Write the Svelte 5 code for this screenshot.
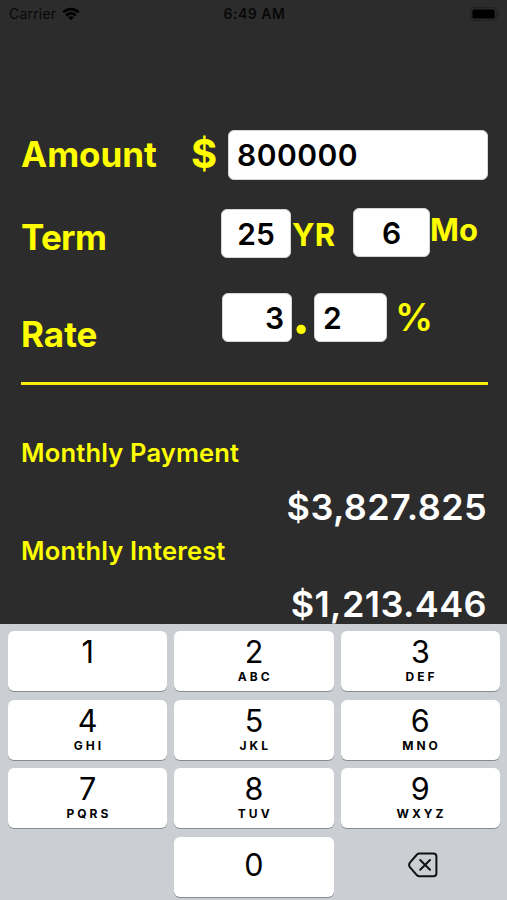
<script>
  let amount = '800000';
  let years = '25';
  let months = '6';
  let rateWhole = '3';
  let rateDecimal = '2';

  const monthlyPayment = '$3,827.825';
  const monthlyInterest = '$1,213.446';

  const keys = [
    { digit: '1', letters: '' },
    { digit: '2', letters: 'ABC' },
    { digit: '3', letters: 'DEF' },
    { digit: '4', letters: 'GHI' },
    { digit: '5', letters: 'JKL' },
    { digit: '6', letters: 'MNO' },
    { digit: '7', letters: 'PQRS' },
    { digit: '8', letters: 'TUV' },
    { digit: '9', letters: 'WXYZ' },
  ];

  function press(digit) {
    amount = amount + digit;
  }

  function erase() {
    amount = amount.slice(0, -1);
  }
</script>

<main>
  <header class="status">
    <div class="carrier">
      <span>Carrier</span>
      <svg width="18" height="14" viewBox="0 0 18 14">
        <path d="M0.4 4.4 A12 12 0 0 1 17.6 4.4 L15.8 6.3 A9.4 9.4 0 0 0 2.2 6.3 Z" />
        <path d="M3.3 7.4 A7.8 7.8 0 0 1 14.7 7.4 L12.8 9.4 A5.3 5.3 0 0 0 5.2 9.4 Z" />
        <path d="M6.2 10.4 A3.9 3.9 0 0 1 11.8 10.4 L9 13.3 Z" />
      </svg>
    </div>
    <span class="time">6:49 AM</span>
    <svg class="battery" width="30" height="14" viewBox="0 0 30 14">
      <rect x="0.7" y="0.7" width="25.6" height="12.6" rx="3" fill="none" stroke="#1f1f1f" />
      <rect x="2.4" y="2.4" width="22.2" height="9.2" rx="1.6" />
      <path d="M27.6 4.7 Q29.2 5.4 29.2 7 Q29.2 8.6 27.6 9.3 Z" fill="#1f1f1f" />
    </svg>
  </header>

  <section class="form">
    <div class="row amount">
      <label for="amount">Amount</label>
      <span class="dollar">$</span>
      <input id="amount" bind:value={amount} />
    </div>
    <div class="row term">
      <label for="years">Term</label>
      <input id="years" class="years" bind:value={years} />
      <span class="unit yr">YR</span>
      <input class="months" bind:value={months} />
      <span class="unit mo">Mo</span>
    </div>
    <div class="row rate">
      <label for="whole">Rate</label>
      <input id="whole" class="whole" bind:value={rateWhole} />
      <span class="point">.</span>
      <input class="decimal" bind:value={rateDecimal} />
      <span class="percent">%</span>
    </div>
  </section>

  <section class="results">
    <h2>Monthly Payment</h2>
    <p class="payment">{monthlyPayment}</p>
    <h2 class="second">Monthly Interest</h2>
    <p class="interest">{monthlyInterest}</p>
  </section>

  <section class="keyboard">
    {#each keys as key}
      <button class="key" on:click={() => press(key.digit)}>
        <span class="digit">{key.digit}</span>
        <span class="letters">{key.letters}</span>
      </button>
    {/each}
    <span></span>
    <button class="key zero" on:click={() => press('0')}>
      <span class="digit">0</span>
    </button>
    <button class="erase" aria-label="Delete" on:click={erase}>
      <svg width="30" height="26" viewBox="0 0 30 26">
        <path d="M11.2 1.6 H25.4 Q28.4 1.6 28.4 4.6 V21.2 Q28.4 24.2 25.4 24.2 H11.2 Q9.9 24.2 9 23.3 L1.9 15.1 Q0.3 12.9 1.9 10.7 L9 2.5 Q9.9 1.6 11.2 1.6 Z" />
        <path d="M12.2 8 L22 17.8 M22 8 L12.2 17.8" />
      </svg>
    </button>
  </section>
</main>

<style>
  :global(body) {
    margin: 0;
    background: #2c2c2c;
  }

  main {
    display: flex;
    flex-direction: column;
    width: 507px;
    height: 900px;
    overflow: hidden;
    background: #2c2c2c;
    color: #ffff00;
    font-family: Inter, "Liberation Sans", sans-serif;
  }

  .status {
    display: grid;
    grid-template-columns: 1fr auto 1fr;
    align-items: center;
    height: 27px;
    padding: 0 7px 0 9px;
    box-sizing: border-box;
    color: #080808;
    font-size: 14px;
    letter-spacing: 0.2px;
  }
  .carrier {
    display: flex;
    align-items: center;
    gap: 6px;
  }
  .time {
    font-weight: 600;
    letter-spacing: 0.5px;
  }
  .battery {
    justify-self: end;
  }

  .form {
    height: 255px;
    margin: 100px 19px 0 21px;
    border-bottom: 3px solid #f8ee0c;
  }
  .row {
    display: flex;
    align-items: flex-start;
    line-height: 1;
  }
  .amount {
    height: 78px;
    padding-top: 3px;
  }
  .term {
    height: 85px;
  }
  label {
    flex: none;
    font-size: 35px;
    font-weight: 700;
  }
  .amount label {
    width: 170px;
    margin-top: 7px;
  }
  .term label {
    width: 200px;
    margin-top: 12px;
    letter-spacing: -0.7px;
  }
  .rate label {
    width: 201px;
    margin-top: 24px;
  }

  input {
    flex: none;
    box-sizing: border-box;
    height: 49px;
    margin: 0;
    padding: 0 9px;
    border: 1px solid #d6d6d6;
    border-radius: 6px;
    outline: none;
    background: #fff;
    color: #000;
    font: 600 30px Inter, "Liberation Sans", sans-serif;
  }
  .dollar {
    width: 37px;
    margin-top: 4px;
    font-size: 40px;
    font-weight: 700;
  }
  #amount {
    flex: 1;
    min-width: 0;
    height: 50px;
    padding: 0 8px;
    letter-spacing: 0.5px;
  }
  .years {
    width: 70px;
    margin-top: 1px;
    text-align: center;
  }
  .months {
    width: 77px;
    text-align: center;
  }
  .unit {
    font-size: 31px;
    font-weight: 700;
  }
  .yr {
    width: 61px;
    margin: 11px 0 0 1px;
  }
  .mo {
    margin-top: 6px;
  }
  .whole {
    width: 70px;
    padding-right: 7px;
    text-align: right;
  }
  .decimal {
    width: 73px;
    padding-left: 8px;
  }
  .point {
    width: 18px;
    padding-right: 4px;
    font-size: 55px;
    font-weight: 700;
    margin-top: -7px;
    text-align: center;
  }
  .percent {
    margin: 5px 0 0 8px;
    font-size: 38px;
    font-weight: 600;
  }

  .results {
    flex: 1;
    padding: 55px 20px 0 21px;
    line-height: 1;
  }
  h2 {
    margin: 0;
    font-size: 25.5px;
    font-weight: 600;
    letter-spacing: 0.17px;
  }
  p {
    margin: 0;
    color: #fff;
    font-size: 36px;
    font-weight: 600;
    letter-spacing: 0.4px;
    text-align: right;
  }
  .payment {
    margin-top: 23px;
  }
  .second {
    margin-top: 13px;
  }
  .interest {
    margin-top: 23px;
  }

  .keyboard {
    flex: none;
    display: grid;
    grid-template-columns: repeat(3, 1fr);
    grid-auto-rows: 60px;
    gap: 8.5px 7px;
    height: 276px;
    box-sizing: border-box;
    padding: 7px 7px 0 8px;
    background: #cbced3;
  }
  button {
    display: flex;
    flex-direction: column;
    align-items: center;
    margin: 0;
    padding: 0;
    border: none;
    background: none;
    color: #000;
    font-family: inherit;
  }
  .key {
    padding-top: 6px;
    border-radius: 6px;
    background: #fff;
    box-shadow: 0 1px 0 #898b8f;
  }
  .digit {
    font-size: 30.5px;
    font-weight: 400;
    line-height: 30px;
  }
  .letters {
    margin-top: 4px;
    padding-left: 2.5px;
    font-size: 12px;
    font-weight: 700;
    line-height: 12px;
    letter-spacing: 3px;
  }
  .zero {
    padding-top: 13px;
  }
  .erase {
    justify-content: center;
  }
  .erase svg {
    margin: 0 0 3px 6px;
    fill: none;
    stroke: #111;
    stroke-width: 2;
    stroke-linecap: round;
  }
</style>
